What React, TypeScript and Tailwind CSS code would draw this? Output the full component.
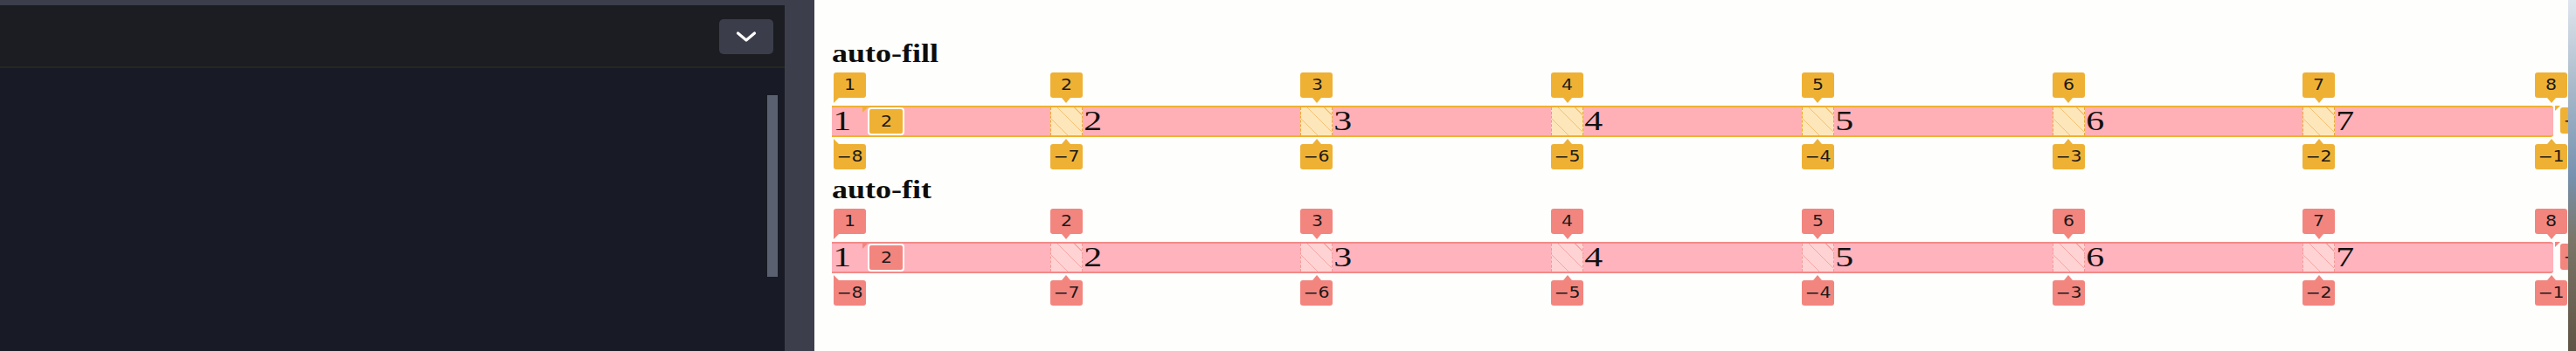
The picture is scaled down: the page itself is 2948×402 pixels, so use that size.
import React from "react";

type Tone = {
  bar: string;
  gap: string;
  label: string;
  tailDown: string;
  tailUp: string;
};

const fillTone: Tone = {
  bar: "border-[#efb032] bg-[#ffb0b6]",
  gap: "border-[#eba92f] bg-[repeating-linear-gradient(45deg,#fde6ba_0px,#fde6ba_13px,#f4c173_13px,#f4c173_14px)]",
  label: "bg-[#efb134]",
  tailDown: "border-t-[#efb134]",
  tailUp: "border-b-[#efb134]",
};

const fitTone: Tone = {
  bar: "border-[#f28a88] bg-[#ffb3bd]",
  gap: "border-[#f39a98] bg-[repeating-linear-gradient(45deg,#ffd3d4_0px,#ffd3d4_13px,#f6a5a3_13px,#f6a5a3_14px)]",
  label: "bg-[#f3857f]",
  tailDown: "border-t-[#f3857f]",
  tailUp: "border-b-[#f3857f]",
};

function LabelText({ children }: { children: React.ReactNode }) {
  return (
    <span className="inline-block scale-x-[1.2] font-['DejaVu_Sans',sans-serif] text-[17px] leading-none text-[#1a1a1a]">
      {children}
    </span>
  );
}

function Label({
  text,
  tone,
  side,
  edge = false,
  className = "",
}: {
  text: string;
  tone: Tone;
  side: "top" | "bottom";
  edge?: boolean;
  className?: string;
}) {
  const pos = side === "top" ? "bottom-[calc(100%+11px)]" : "top-[calc(100%+10px)]";
  const corner = edge ? (side === "top" ? "rounded-bl-none" : "rounded-tl-none") : "";
  let tail = "";
  if (side === "top") {
    tail = edge
      ? `left-0 top-full border-r-[6px] border-t-[6px] border-r-transparent ${tone.tailDown}`
      : `left-1/2 top-full -translate-x-1/2 border-x-[5px] border-t-[6px] border-x-transparent ${tone.tailDown}`;
  } else {
    tail = edge
      ? `left-0 bottom-full border-r-[6px] border-b-[6px] border-r-transparent ${tone.tailUp}`
      : `left-1/2 bottom-full -translate-x-1/2 border-x-[5px] border-b-[6px] border-x-transparent ${tone.tailUp}`;
  }
  return (
    <div
      className={`absolute ${pos} ${className} z-10 flex h-[29px] w-[37px] items-center justify-center rounded-[3px] ${corner} ${tone.label}`}
    >
      <LabelText>{text}</LabelText>
      <span className={`absolute h-0 w-0 ${tail}`} />
    </div>
  );
}

function CellText({ n }: { n: number }) {
  return (
    <span className="inline-block origin-left scale-x-[1.35] pl-[1px] font-['Liberation_Serif',serif] text-[31px] leading-[31px] text-[#111]">
      {n}
    </span>
  );
}

function GridRow({ title, tone, className = "" }: { title: string; tone: Tone; className?: string }) {
  const tracks = [1, 2, 3, 4, 5, 6, 7];
  return (
    <section className={className}>
      <h2 className="h-[29px] font-['Liberation_Serif',serif] text-[30px] font-bold leading-[29px] text-[#0d0d0d]">
        <span className="inline-block origin-left scale-x-[1.2]">{title}</span>
      </h2>
      <div className={`relative mt-[46px] flex h-[36px] w-[1970px] rounded-r-[3px] border-y-2 ${tone.bar}`}>
        {tracks.map((t) => (
          <React.Fragment key={t}>
            <div className="relative flex-1">
              {t === 1 ? (
                <>
                  <CellText n={1} />
                  <Label text="1" tone={tone} side="top" edge className="left-[2px]" />
                  <Label text="−8" tone={tone} side="bottom" edge className="left-[2px]" />
                  <div
                    className={`absolute left-[41px] top-0 flex h-[32px] w-[42px] items-center justify-center rounded-[4px] border-2 border-white ${tone.label}`}
                  >
                    <LabelText>2</LabelText>
                    <span className={`absolute -left-[8px] -top-[3px] h-0 w-0 border-r-[7px] border-t-[7px] border-r-transparent ${tone.tailDown}`} />
                  </div>
                </>
              ) : (
                <CellText n={t} />
              )}
              {t === 7 && (
                <>
                  <Label text="8" tone={tone} side="top" className="right-[-16px]" />
                  <Label text="−1" tone={tone} side="bottom" className="right-[-16px]" />
                  <div
                    className={`absolute left-[calc(100%+8px)] top-0 flex h-[30px] w-[37px] items-center justify-center rounded-[3px] ${tone.label}`}
                  >
                    <LabelText>−1</LabelText>
                    <span className={`absolute -left-[6px] -top-[2px] h-0 w-0 border-r-[6px] border-t-[6px] border-r-transparent ${tone.tailDown}`} />
                  </div>
                </>
              )}
            </div>
            {t < 7 && (
              <div className={`relative w-[37px] border-x border-dashed ${tone.gap}`}>
                <Label text={String(t + 1)} tone={tone} side="top" className="left-[-1px]" />
                <Label text={`−${8 - t}`} tone={tone} side="bottom" className="left-[-1px]" />
              </div>
            )}
          </React.Fragment>
        ))}
      </div>
    </section>
  );
}

export default function App() {
  return (
    <div className="flex h-[402px] w-[2948px] overflow-hidden bg-white">
      {/* devtools side */}
      <div className="flex h-full w-[932px] shrink-0 flex-col bg-[#3c3f4b] pr-[34px] pt-[6px]">
        <div className="flex h-[70px] items-start justify-end bg-[#1c1d22] pr-[13px] pt-[16px]">
          <button className="flex h-[40px] w-[62px] items-center justify-center rounded-[5px] bg-[#3b3e4a]">
            <svg width="26" height="14" viewBox="0 0 26 14">
              <path
                d="M3.5 3 L13 11 L22.5 3"
                stroke="white"
                strokeWidth="3.2"
                fill="none"
                strokeLinecap="round"
                strokeLinejoin="round"
              />
            </svg>
          </button>
        </div>
        <div className="h-[2px] bg-[#24271f]" />
        <div className="flex flex-1 justify-end bg-[#181a25] pr-[8px] pt-[31px]">
          <div className="h-[208px] w-[12px] bg-[#596070]" />
        </div>
      </div>

      {/* page */}
      <div className="relative flex-1 overflow-hidden bg-[#fefefd] pl-[20px] pt-[46px]">
        <GridRow title="auto-fill" tone={fillTone} />
        <GridRow title="auto-fit" tone={fitTone} className="mt-[45px]" />
      </div>

      {/* desktop wallpaper peeking through */}
      <div className="h-full w-[9px] shrink-0 bg-[linear-gradient(180deg,#dfe6ee_0%,#a9b9ca_25%,#7692b0_50%,#7b7668_68%,#5f5446_100%)]" />
    </div>
  );
}
